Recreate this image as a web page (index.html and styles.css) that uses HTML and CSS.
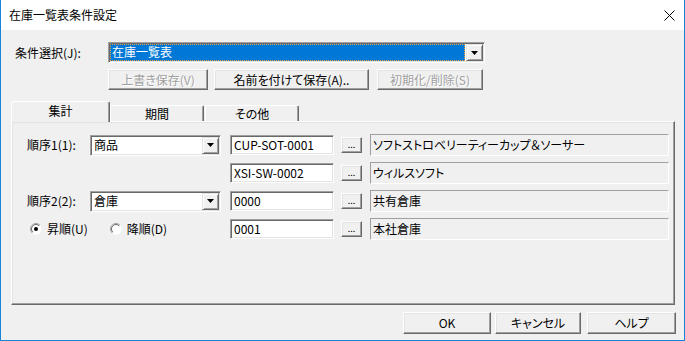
FILE: index.html
```html
<!DOCTYPE html>
<html lang="ja">
<head>
<meta charset="utf-8">
<title>在庫一覧表条件設定</title>
<link rel="stylesheet" href="styles.css">
</head>
<body>
<div class="window">
  <div class="titlebar">
    <span class="title">在庫一覧表条件設定</span>
    <svg class="close" width="11" height="11" viewBox="0 0 11 11"><path d="M0.5 0.5 L10.5 10.5 M10.5 0.5 L0.5 10.5" stroke="#000" stroke-width="1" fill="none"/></svg>
  </div>
  <div class="cond-row">
    <span class="cond-label">条件選択(J):</span>
    <div class="combo combo-main">
      <span class="combo-value selected">在庫一覧表</span>
      <span class="dd-btn"><svg width="7" height="4" viewBox="0 0 7 4"><path d="M0 0 H7 L3.5 4 Z" fill="#000"/></svg></span>
    </div>
  </div>
  <div class="btn-row">
    <button class="btn disabled b-overwrite">上書き保存(V)</button>
    <button class="btn b-saveas">名前を付けて保存(A)..</button>
    <button class="btn disabled b-reset">初期化/削除(S)</button>
  </div>
  <div class="tabs">
    <div class="tab active t1">集計</div>
    <div class="tab t2">期間</div>
    <div class="tab t3">その他</div>
  </div>
  <div class="panel">
    <div class="grid">
      <span class="lbl">順序1(1):</span>
      <div class="combo combo-small">
        <span class="combo-value">商品</span>
        <span class="dd-btn"><svg width="7" height="4" viewBox="0 0 7 4"><path d="M0 0 H7 L3.5 4 Z" fill="#000"/></svg></span>
      </div>
      <div class="field">CUP-SOT-0001</div>
      <button class="btn dots">...</button>
      <div class="display">ソフトストロベリーティーカップ＆ソーサー</div>

      <span class="lbl"></span>
      <span></span>
      <div class="field">XSI-SW-0002</div>
      <button class="btn dots">...</button>
      <div class="display">ウィルスソフト</div>

      <span class="lbl">順序2(2):</span>
      <div class="combo combo-small">
        <span class="combo-value">倉庫</span>
        <span class="dd-btn"><svg width="7" height="4" viewBox="0 0 7 4"><path d="M0 0 H7 L3.5 4 Z" fill="#000"/></svg></span>
      </div>
      <div class="field">0000</div>
      <button class="btn dots">...</button>
      <div class="display">共有倉庫</div>

      <div class="radios">
        <span class="radio-item">
          <svg class="radio" width="12" height="12" viewBox="0 0 12 12"><circle cx="6" cy="6" r="5.5" fill="#fff"/><path d="M2.1 9.9 A5.5 5.5 0 0 1 9.9 2.1" stroke="#a0a0a0" fill="none"/><path d="M2.8 9.2 A4.5 4.5 0 0 1 9.2 2.8" stroke="#696969" fill="none"/><circle cx="6" cy="6" r="2" fill="#000"/></svg>
          <span>昇順(U)</span>
        </span>
        <span class="radio-item">
          <svg class="radio" width="12" height="12" viewBox="0 0 12 12"><circle cx="6" cy="6" r="5.5" fill="#fff"/><path d="M2.1 9.9 A5.5 5.5 0 0 1 9.9 2.1" stroke="#a0a0a0" fill="none"/><path d="M2.8 9.2 A4.5 4.5 0 0 1 9.2 2.8" stroke="#696969" fill="none"/></svg>
          <span>降順(D)</span>
        </span>
      </div>
      <div class="field">0001</div>
      <button class="btn dots">...</button>
      <div class="display">本社倉庫</div>
    </div>
  </div>
  <div class="footer">
    <button class="btn b-ok">OK</button>
    <button class="btn b-cancel">キャンセル</button>
    <button class="btn b-help">ヘルプ</button>
  </div>
</div>
</body>
</html>
```
FILE: styles.css
```css
* { box-sizing: border-box; }
html, body { margin: 0; padding: 0; }
body {
  width: 685px;
  height: 341px;
  overflow: hidden;
  background: #fff;
  font-family: "Noto Sans CJK JP", "Noto Sans", sans-serif;
  font-size: 12px;
  font-feature-settings: "palt";
  color: #000;
}
.window {
  width: 685px;
  height: 341px;
  border: 1px solid #1883d7;
  border-top: none;
  background: #f0f0f0;
  display: flex;
  flex-direction: column;
}
.titlebar {
  height: 30px;
  flex: none;
  background: #fff;
  display: flex;
  align-items: center;
  justify-content: space-between;
  padding: 0 9px 0 8px;
}
.title { line-height: 16px; }

/* condition row */
.cond-row {
  margin-top: 12px;
  padding-left: 14px;
  display: flex;
  align-items: center;
  height: 21px;
}
.cond-label { width: 93px; line-height: 16px; }

.combo {
  display: flex;
  background: #fff;
  border: 1px solid;
  border-color: #a0a0a0 #fff #fff #a0a0a0;
  box-shadow: inset 1px 1px #696969, inset -1px -1px #e3e3e3;
  padding: 1px;
}
.combo-main { width: 377px; height: 21px; }
.combo-small { width: 131px; height: 21px; }
.combo-value {
  flex: 1;
  line-height: 15px;
  padding-left: 2px;
  white-space: nowrap;
}
.combo-value.selected {
  background: #0078d7;
  color: #fff;
  border: 1px dotted #f2a03c;
  margin-right: 1px;
  padding-left: 1px;
  line-height: 13px;
}
.dd-btn {
  width: 17px;
  flex: none;
  display: flex;
  align-items: center;
  justify-content: center;
  background: #f0f0f0;
  border: 1px solid;
  border-color: #e3e3e3 #696969 #696969 #e3e3e3;
  box-shadow: inset 1px 1px #fff, inset -1px -1px #a0a0a0;
}

/* buttons */
.btn {
  font-family: "Noto Sans CJK JP", "Noto Sans", sans-serif;
  font-size: 12px;
  font-feature-settings: "palt";
  color: #000;
  background: #f0f0f0;
  border: 1px solid;
  border-color: #fff #696969 #696969 #fff;
  box-shadow: inset -1px -1px #a0a0a0, inset 1px 1px #e3e3e3;
  padding: 0;
  margin: 0;
  height: 21px;
  line-height: 16px;
}
.btn.disabled {
  color: #a0a0a0;
  text-shadow: 1px 1px 0 #fff;
}
.btn-row {
  margin-top: 6px;
  padding-left: 107px;
  display: flex;
  height: 21px;
}
.b-overwrite { width: 100px; }
.b-saveas { width: 155px; margin-left: 6px; }
.b-reset { width: 106px; margin-left: 8px; }

/* tabs */
.tabs {
  margin-top: 11px;
  margin-left: 10px;
  margin-bottom: -1px;
  height: 21px;
  display: flex;
  align-items: flex-end;
}
.tab {
  height: 17px;
  background: #f0f0f0;
  border-top: 1px solid #fff;
  border-left: 1px solid #fff;
  border-right: 1px solid #696969;
  box-shadow: inset -1px 0 #a0a0a0;
  border-radius: 2px 2px 0 0;
  text-align: center;
  line-height: 15px;
}
.tab.active {
  height: 21px;
  position: relative;
  z-index: 1;
  line-height: 17px;
}
.t1 { width: 99px; }
.t2 { width: 94px; }
.t3 { width: 94px; margin-left: 1px; }

.panel {
  margin-left: 10px;
  width: 664px;
  height: 184px;
  flex: none;
  border: 1px solid;
  border-color: #fff #696969 #696969 #fff;
  box-shadow: inset -1px -1px #a0a0a0, inset 1px 1px #e3e3e3;
  padding: 12px 0 0 15px;
}
.grid {
  display: grid;
  grid-template-columns: 63px 140px 111px 29px 299px;
  grid-auto-rows: 22px;
  row-gap: 6px;
  align-items: center;
}
.lbl { line-height: 16px; }
.field {
  width: 104px;
  height: 20px;
  background: #fff;
  border: 1px solid;
  border-color: #a0a0a0 #fff #fff #a0a0a0;
  box-shadow: inset 1px 1px #696969, inset -1px -1px #e3e3e3;
  padding: 0 0 0 3px;
  line-height: 18px;
  white-space: nowrap;
}
.btn.dots {
  width: 21px;
  height: 16px;
  font-size: 9px;
  line-height: 14px;
}
.display {
  width: 299px;
  height: 22px;
  border: 1px solid;
  border-color: #a0a0a0 #fff #fff #a0a0a0;
  padding-left: 2px;
  line-height: 20px;
  white-space: nowrap;
}
.radios {
  grid-column: 1 / span 2;
  display: flex;
  align-items: center;
  padding-left: 3px;
  gap: 22px;
}
.radio-item {
  display: flex;
  align-items: center;
  gap: 5px;
  line-height: 16px;
}
.radio { flex: none; }

.footer {
  margin-top: 7px;
  display: flex;
  justify-content: flex-end;
  padding-right: 8px;
  height: 22px;
}
.footer .btn { height: 22px; }
.b-ok { width: 88px; }
.b-cancel { width: 86px; margin-left: 4px; }
.b-help { width: 89px; margin-left: 6px; }
```
